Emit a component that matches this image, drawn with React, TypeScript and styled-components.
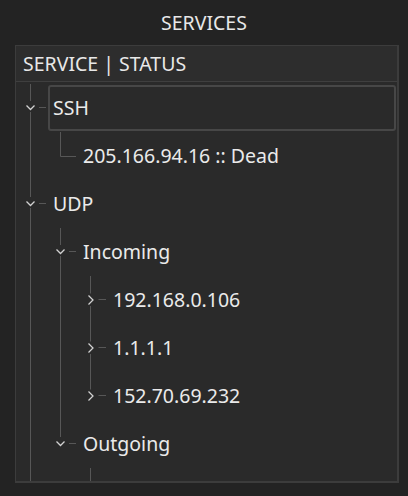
import React from "react";
import styled, { createGlobalStyle } from "styled-components";

const Global = createGlobalStyle`
  html, body {
    margin: 0;
    padding: 0;
    background: #232323;
    width: 408px;
    height: 496px;
    overflow: hidden;
  }
  body {
    font-family: "Noto Sans", "DejaVu Sans", sans-serif;
    color: #e8e8e8;
  }
`;

const Page = styled.div`
  width: 408px;
  height: 496px;
  display: flex;
  flex-direction: column;
`;

const Title = styled.div`
  height: 45px;
  line-height: 45px;
  font-size: 19.5px;
  text-align: center;
  color: #e8e8e8;
`;

const Panel = styled.div`
  box-sizing: border-box;
  height: 438px;
  margin: 0 9px 0 15px;
  border-style: solid;
  border-color: #3c3c3c;
  border-width: 1px 2px 2px 1px;
  background: #2a2a2a;
  display: flex;
  flex-direction: column;
  overflow: hidden;
`;

const Header = styled.div`
  height: 35px;
  line-height: 35px;
  flex: none;
  padding-left: 7px;
  font-size: 19.5px;
  background: #2d2d2d;
  border-bottom: 1px solid #3f3f3f;
  color: #e8e8e8;
`;

const Body = styled.div`
  flex: 1;
  overflow: hidden;
  padding-top: 2px;
`;

const Row = styled.div`
  display: flex;
  height: 48px;
`;

const Guide = styled.div<{ $line: boolean }>`
  flex: none;
  width: 30px;
  height: 100%;
  background: ${(p) =>
    p.$line
      ? "linear-gradient(to right, transparent 14px, #575757 14px, #575757 15px, transparent 15px)"
      : "transparent"};
`;

const Branch = styled.svg`
  flex: none;
  width: 30px;
  height: 48px;
  display: block;
`;

const Label = styled.div<{ $focused?: boolean }>`
  flex: 1;
  margin: 1px 1px 1px 2px;
  padding-left: 3px;
  border: 2px solid ${(p) => (p.$focused ? "#474747" : "transparent")};
  border-radius: 3px;
  font-size: 19.5px;
  line-height: 42px;
  white-space: nowrap;
  color: #eaeaea;
`;

type Kind = "open" | "closed" | "leaf";

type Item = {
  label: string;
  depth: number;
  guides: boolean[];
  kind: Kind;
  next: boolean;
  focused?: boolean;
};

const items: Item[] = [
  { label: "SSH", depth: 0, guides: [], kind: "open", next: true, focused: true },
  { label: "205.166.94.16 :: Dead", depth: 1, guides: [true], kind: "leaf", next: false },
  { label: "UDP", depth: 0, guides: [], kind: "open", next: true },
  { label: "Incoming", depth: 1, guides: [true], kind: "open", next: true },
  { label: "192.168.0.106", depth: 2, guides: [true, true], kind: "closed", next: true },
  { label: "1.1.1.1", depth: 2, guides: [true, true], kind: "closed", next: true },
  { label: "152.70.69.232", depth: 2, guides: [true, true], kind: "closed", next: false },
  { label: "Outgoing", depth: 1, guides: [true], kind: "open", next: false },
  { label: "", depth: 2, guides: [true, false], kind: "closed", next: false },
];

const LINE = "#575757";
const ARROW = "#d2d2d2";

function BranchIcon({ kind, next }: { kind: Kind; next: boolean }) {
  return (
    <Branch viewBox="0 0 30 48">
      {kind === "open" && (
        <>
          <line x1={14.5} y1={0} x2={14.5} y2={17} stroke={LINE} strokeWidth={1} />
          {next && <line x1={14.5} y1={28} x2={14.5} y2={48} stroke={LINE} strokeWidth={1} />}
          <path d="M10.5 21.5 L14.5 25.5 L18.5 21.5" fill="none" stroke={ARROW} strokeWidth={1.25} />
          <line x1={23} y1={23.5} x2={30} y2={23.5} stroke={LINE} strokeWidth={1} />
        </>
      )}
      {kind === "closed" && (
        <>
          <line x1={14.5} y1={0} x2={14.5} y2={17.5} stroke={LINE} strokeWidth={1} />
          {next && <line x1={14.5} y1={30} x2={14.5} y2={48} stroke={LINE} strokeWidth={1} />}
          <path d="M12.5 19.5 L17 24 L12.5 28.5" fill="none" stroke={ARROW} strokeWidth={1.25} />
          <line x1={22.5} y1={23.5} x2={30} y2={23.5} stroke={LINE} strokeWidth={1} />
        </>
      )}
      {kind === "leaf" && (
        <>
          <line x1={14.5} y1={0} x2={14.5} y2={next ? 48 : 24.5} stroke={LINE} strokeWidth={1} />
          <line x1={14.5} y1={24.5} x2={30} y2={24.5} stroke={LINE} strokeWidth={1} />
        </>
      )}
    </Branch>
  );
}

export default function App() {
  return (
    <>
      <Global />
      <Page>
        <Title>SERVICES</Title>
        <Panel>
          <Header>SERVICE | STATUS</Header>
          <Body>
            {items.map((it, i) => (
              <Row key={i}>
                {it.guides.map((g, j) => (
                  <Guide key={j} $line={g} />
                ))}
                <BranchIcon kind={it.kind} next={it.next} />
                <Label $focused={it.focused}>{it.label}</Label>
              </Row>
            ))}
          </Body>
        </Panel>
      </Page>
    </>
  );
}
